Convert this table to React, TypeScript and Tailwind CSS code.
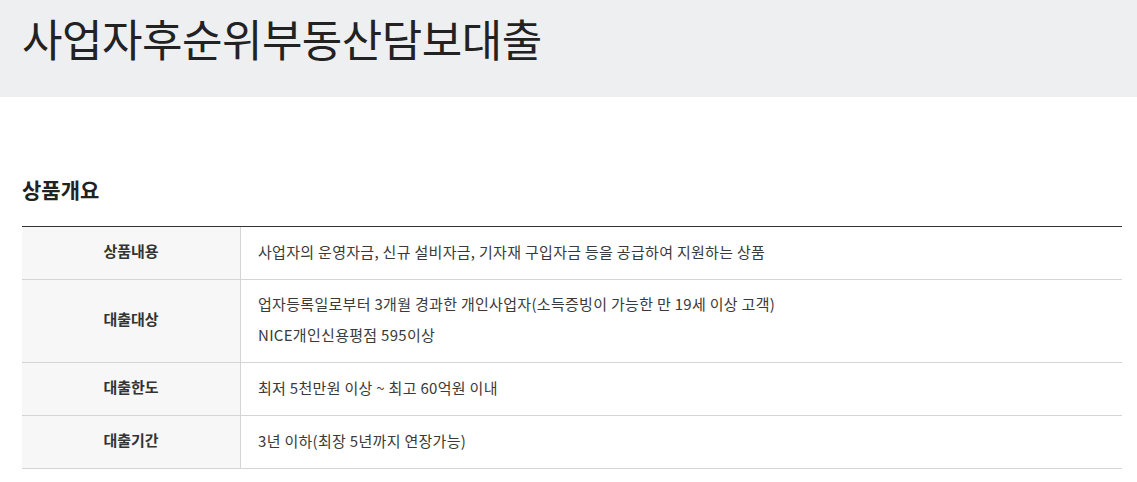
const rows = [
  {
    label: "상품내용",
    lines: ["사업자의 운영자금, 신규 설비자금, 기자재 구입자금 등을 공급하여 지원하는 상품"],
  },
  {
    label: "대출대상",
    lines: [
      "업자등록일로부터 3개월 경과한 개인사업자(소득증빙이 가능한 만 19세 이상 고객)",
      "NICE개인신용평점 595이상",
    ],
  },
  { label: "대출한도", lines: ["최저 5천만원 이상 ~ 최고 60억원 이내"] },
  { label: "대출기간", lines: ["3년 이하(최장 5년까지 연장가능)"] },
];

const App = () => {
  return (
    <div className="w-[1137px] min-h-[482px] bg-white text-[#333] font-['Noto_Sans_CJK_KR','Noto_Sans',sans-serif]">
      <div className="h-[97px] bg-[#eeeff1] px-[22px] pt-[8px]">
        <h1 className="text-[44px] leading-[60px] tracking-[-0.5px] text-[#222]">사업자후순위부동산담보대출</h1>
      </div>
      <div className="px-[22px] pt-[78px]">
        <h2 className="text-[21px] leading-[28px] font-bold text-[#222]">상품개요</h2>
        <div className="mt-[23px] w-[1100px] border-t border-[#333]">
          {rows.map((r) => (
            <div key={r.label} className="flex min-h-[53px] border-b border-[#d5d5d5]">
              <div className="w-[219px] shrink-0 bg-[#f7f7f7] border-r border-[#d5d5d5] flex items-center justify-center pb-[3px] text-[15px] font-bold text-[#333]">
                {r.label}
              </div>
              <div className="flex-1 flex flex-col justify-center pt-[8px] pb-[12px] pl-[17px] text-[15px] tracking-[0.3px] leading-[31px] text-[#3a3a3a]">
                {r.lines.map((l) => (
                  <div key={l}>{l}</div>
                ))}
              </div>
            </div>
          ))}
        </div>
      </div>
    </div>
  );
};

export default App;
